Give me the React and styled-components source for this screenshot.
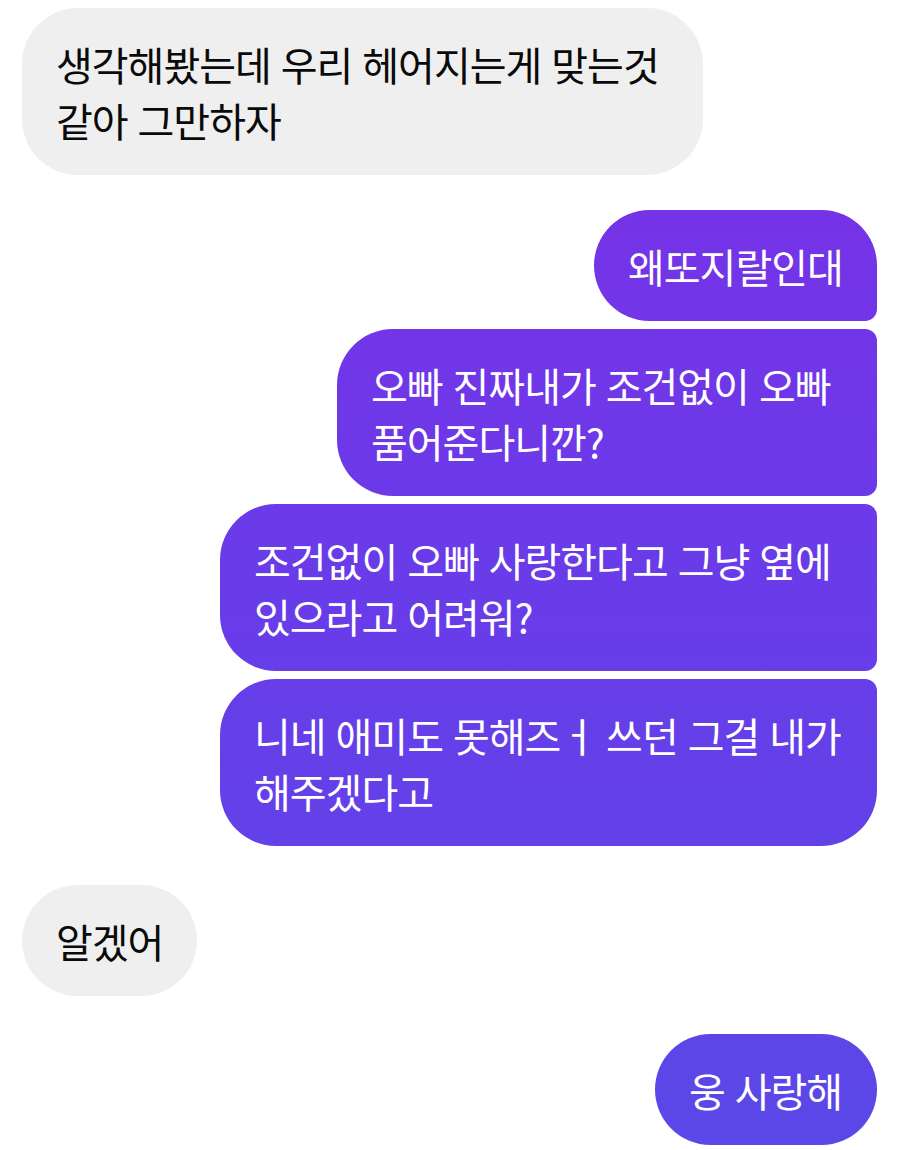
import React from "react";
import styled, { createGlobalStyle, css } from "styled-components";

const GlobalStyle = createGlobalStyle`
  html, body {
    margin: 0;
    padding: 0;
    background: #ffffff;
  }
  body {
    font-family: "Noto Sans CJK KR", "Noto Sans", sans-serif;
  }
`;

const Thread = styled.div`
  width: 900px;
  height: 1150px;
  box-sizing: border-box;
  padding: 8px 23px 0 22px;
  display: flex;
  flex-direction: column;
  overflow: hidden;
`;

const Group = styled.div`
  display: flex;
  flex-direction: column;
  align-items: ${(p) => (p.$mine ? "flex-end" : "flex-start")};
  gap: 8px;
  margin-top: ${(p) => p.$gap || 0}px;
`;

const big = 56;
const small = 12;

const Bubble = styled.div`
  box-sizing: border-box;
  width: ${(p) => (p.$w ? `${p.$w}px` : "auto")};
  padding: 28px 0 27px 34px;
  font-size: 40px;
  line-height: 56px;
  letter-spacing: -1px;
  word-spacing: 2px;
  white-space: pre;
  border-radius: ${big}px;

  ${(p) =>
    p.$mine
      ? css`
          color: #ffffff;
          background: linear-gradient(
            180deg,
            #7d2ee6 0px,
            #6b3ae9 520px,
            #5a48e8 1150px
          );
          background-attachment: fixed;
          border-top-right-radius: ${p.$first ? big : small}px;
          border-bottom-right-radius: ${p.$last ? big : small}px;
        `
      : css`
          color: #0a0a0a;
          background: #efefef;
        `}
`;

const mine1 = [
  { t: "왜또지랄인대", w: 283 },
  { t: "오빠 진짜내가 조건없이 오빠\n품어준다니깐?", w: 540 },
  { t: "조건없이 오빠 사랑한다고 그냥 옆에\n있으라고 어려워?", w: 657 },
  { t: "니네 애미도 못해즈ㅓ 쓰던 그걸 내가\n해주겠다고", w: 657 },
];

export default function App() {
  return (
    <>
      <GlobalStyle />
      <Thread>
        <Group>
          <Bubble $w={681}>{"생각해봤는데 우리 헤어지는게 맞는것\n같아 그만하자"}</Bubble>
        </Group>
        <Group $mine $gap={35}>
          {mine1.map((m, i) => (
            <Bubble
              key={m.t}
              $mine
              $w={m.w}
              $first={i === 0}
              $last={i === mine1.length - 1}
            >
              {m.t}
            </Bubble>
          ))}
        </Group>
        <Group $gap={39}>
          <Bubble $w={175}>알겠어</Bubble>
        </Group>
        <Group $mine $gap={38}>
          <Bubble $mine $first $last $w={222}>
            웅 사랑해
          </Bubble>
        </Group>
      </Thread>
    </>
  );
}
